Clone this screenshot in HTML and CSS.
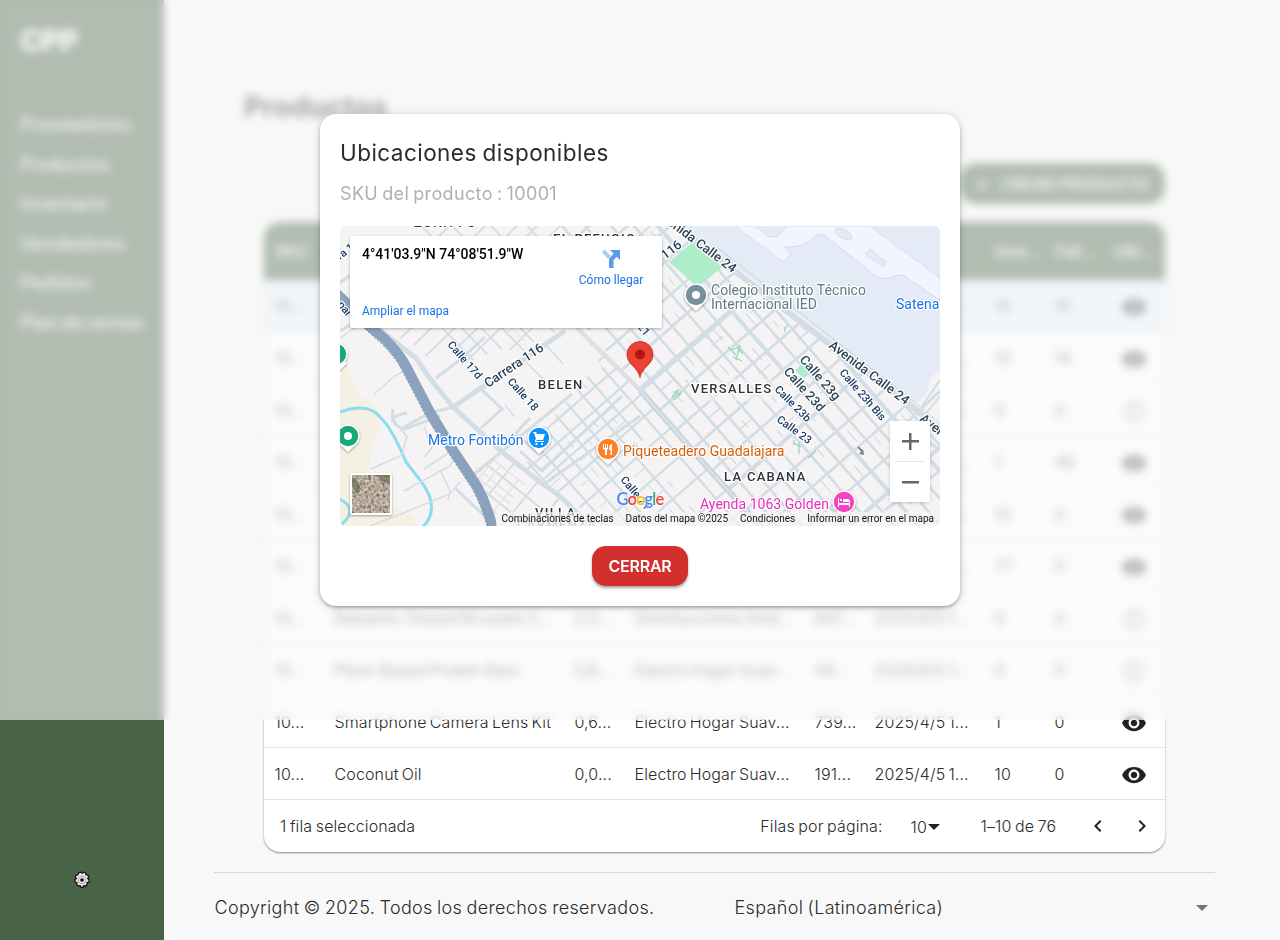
FILE: index.html
```html
<!DOCTYPE html>
<html lang="es">
<head>
<meta charset="utf-8">
<title>CPP - Productos</title>
<link rel="stylesheet" href="styles.css">
</head>
<body>
<svg width="0" height="0" class="defs">
  <symbol id="eye" viewBox="0 0 24 24"><path d="M12 4.5C7 4.5 2.73 7.61 1 12c1.73 4.39 6 7.5 11 7.5s9.27-3.11 11-7.5c-1.73-4.39-6-7.5-11-7.5M12 17c-2.76 0-5-2.24-5-5s2.24-5 5-5 5 2.24 5 5-2.24 5-5 5m0-8c-1.66 0-3 1.34-3 3s1.34 3 3 3 3-1.34 3-3-1.34-3-3-3"/></symbol>
  <symbol id="off" viewBox="0 0 24 24"><path fill-rule="evenodd" d="M12 2a10 10 0 1 0 0 20 10 10 0 0 0 0-20m0 18a8 8 0 1 1 0-16 8 8 0 0 1 0 16M11 7h2v6h-2zM11 15h2v2h-2z"/></symbol>
</svg>
<div class="app">
  <aside class="sidebar">
    <div class="brand">CPP</div>
    <nav class="nav"><a>Proveedores</a><a>Productos</a><a>Inventario</a><a>Vendedores</a><a>Pedidos</a><a>Plan de ventas</a></nav>
    <svg class="gear" viewBox="0 0 18 18"><path d="M7.500 1.200 9 2.200l1.500-1 2 .8.500 1.800 1.800.3.900 2-1 1.400 1.600 1.500-.5 2-1.800.6.300 1.900-1.600 1.500-1.900-.3-.8 1.700H8l-.8-1.700-1.900.3-1.600-1.500.3-1.900-1.800-.6-.5-2 1.600-1.500-1-1.400.9-2 1.800-.3.500-1.800z" fill="#e8e8e8" stroke="#111" stroke-width="1.300" stroke-linejoin="round"/><circle cx="9" cy="9" r="3.700" fill="none" stroke="#aaa" stroke-width="1.200"/><circle cx="9" cy="9" r="1.800" fill="#000"/></svg>
  </aside>
  <main class="main">
    <h1 class="title">Productos</h1>
    <div class="toolbar"><button class="create"><span>+</span>CREAR PRODUCTO</button></div>
    <section class="table">
      <div class="row head"><span>SKU</span><span>Nombre</span><span>Volu...</span><span>Fabricante</span><span>Pre...</span><span>Fecha</span><span>Inve...</span><span>Fall...</span><span class="icon">Ubi...</span></div>
      <div class="row selected"><span>10...</span><span></span><span></span><span></span><span></span><span>2025/4/5 1...</span><span>10</span><span>10</span><span class="icon"><svg><use href="#eye"/></svg></span></div>
      <div class="row"><span>10...</span><span></span><span></span><span></span><span></span><span>2025/4/5 1...</span><span>10</span><span>14</span><span class="icon"><svg><use href="#eye"/></svg></span></div>
      <div class="row"><span>10...</span><span></span><span></span><span></span><span></span><span>2025/4/5 1...</span><span>0</span><span>0</span><span class="icon muted"><svg><use href="#off"/></svg></span></div>
      <div class="row"><span>10...</span><span></span><span></span><span></span><span></span><span>2025/4/5 1...</span><span>1</span><span>48</span><span class="icon"><svg><use href="#eye"/></svg></span></div>
      <div class="row"><span>10...</span><span></span><span></span><span></span><span></span><span>2025/4/5 1...</span><span>10</span><span>0</span><span class="icon"><svg><use href="#eye"/></svg></span></div>
      <div class="row"><span>10...</span><span></span><span></span><span></span><span></span><span>2025/4/5 1...</span><span>77</span><span>0</span><span class="icon"><svg><use href="#eye"/></svg></span></div>
      <div class="row"><span>10...</span><span>Balsamic Glazed Brussels S...</span><span>0,3...</span><span>Distribuciones Andi...</span><span>847...</span><span>2025/4/5 1...</span><span>0</span><span>0</span><span class="icon muted"><svg><use href="#off"/></svg></span></div>
      <div class="row"><span>10...</span><span>Plant-Based Protein Bars</span><span>0,6...</span><span>Electro Hogar Suav...</span><span>44...</span><span>2025/4/5 1...</span><span>0</span><span>0</span><span class="icon muted"><svg><use href="#off"/></svg></span></div>
      <div class="row"><span>10...</span><span>Smartphone Camera Lens Kit</span><span>0,6...</span><span>Electro Hogar Suav...</span><span>739...</span><span>2025/4/5 1...</span><span>1</span><span>0</span><span class="icon"><svg><use href="#eye"/></svg></span></div>
      <div class="row"><span>10...</span><span>Coconut Oil</span><span>0,0...</span><span>Electro Hogar Suav...</span><span>191...</span><span>2025/4/5 1...</span><span>10</span><span>0</span><span class="icon"><svg><use href="#eye"/></svg></span></div>
      <div class="pager">
        <span class="picked">1 fila seleccionada</span>
        <span class="perpage">Filas por página:</span>
        <span class="size">10<i class="caret"></i></span>
        <span class="range">1–10 de 76</span>
        <svg class="chev" viewBox="0 0 24 24"><path d="M15.410 7.410 14 6l-6 6 6 6 1.410-1.410L10.830 12z"/></svg>
        <svg class="chev" viewBox="0 0 24 24"><path d="M10 6 8.590 7.410 13.170 12l-4.580 4.590L10 18l6-6z"/></svg>
      </div>
    </section>
    <footer class="footer"><span class="copy">Copyright © 2025. Todos los derechos reservados.</span><span class="lang">Español (Latinoamérica)</span><i class="caret grey"></i></footer>
  </main>
</div>

<div class="overlay">
  <div class="modal">
    <h2>Ubicaciones disponibles</h2>
    <p class="sku">SKU del producto : 10001</p>
    <div class="map">
      <svg class="tiles" viewBox="0 0 600 300">
        <defs>
          <clipPath id="east"><path d="M237 102 190 60 215 0H343L400 46 487 113 567 173 600 200V300H423L367 241 300 164Z"/></clipPath>
          <clipPath id="west"><path d="M247 112 300 164 367 241 423 300H262L222 268 180 238 200 205 224 180 236 158 262 142Z"/></clipPath>
          <clipPath id="north"><path d="M40 92 75 0H240V90L222 104 196 112 186 130 165 122 130 135 100 150 76 128Z"/></clipPath>
          <clipPath id="south"><path d="M132 244 165 226 222 270 250 300H154Z"/></clipPath>
          <filter id="ground" x="0" y="0" width="1" height="1"><feTurbulence type="fractalNoise" baseFrequency=".35" numOctaves="3" seed="4"/><feColorMatrix values=".9 .3 0 0 -.15  .8 .3 0 0 -.16  .7 .3 0 0 -.18  0 0 0 0 1"/></filter>
        </defs>
        <rect width="600" height="300" fill="#f5f3f4"/>
        <path fill="#f4f0e4" d="M0 134 7 140 20 170 34 178 41 196 31 224 30 246 52 280 73 290 77 300H0Z"/>
        <path fill="#e4eaf6" d="M341 0 400 44 487 111 567 171 578 177 587 167 590 153 600 143V0Z"/>
        <path fill="#f2f5ff" stroke="#d5dcef" d="M395 0 443 36 451 28 445 21Q463 21 470 15 478 4 487 11L537 51Q545 54 555 50 562 47 567 52L600 74V52L530 0H447L440 8Q434 13 428 10L415 0Z"/>
        <ellipse cx="503.500" cy="8" rx="9" ry="4" transform="rotate(28 503.500 8)" fill="#e4eaf6" stroke="#d5dcef"/>
        <path fill="#e4eaf6" stroke="#d5dcef" d="m530 23 16 13-3 5-18-13z"/>
        <path fill="none" stroke="#8bdcec" stroke-width="3" d="M0 186Q28 176 40 191 52 202 66 236L80 254Q102 282 82 302M0 273Q16 282 6 294L0 300"/>

        <g clip-path="url(#east)"><g transform="translate(300 164) rotate(49)" fill="none" stroke="#d3dde4">
          <path stroke-width="2.700" d="M-260-15H300M-260-33H300M-260-49H300M-260-66H300M-220-86H300M-220-103H300M-220-138H300M-120-155H300M-120-190H300M-120-207H300"/>
          <path stroke-width="4" d="M-220-121H300M-120-173H300"/>
          <path stroke-width="2.700" d="M-186 0V-230M-157 0V-230M-132 0V-230M-104 0V-230M-80 0V-230M-52 0V-230M-27 0V-230M28 0V-230M54 0V-230M79 0V-230M108 0V-230M133 0V-230M160 0V-230M186 0V-230M213 0V-230"/>
          <path stroke-width="1.300" stroke-dasharray="9 58 15 73" d="M-200-24H300M-200-41H300M-220-57H300M-190-77H300M-220-95H300M-180-112H300M-210-130H300M-120-146H300M-100-164H300M-120-181H300M-120-199H300"/>
          <path stroke-width="1.500" stroke-dasharray="17 50 16 36" d="M-172 0V-200M-145-15V-200M-117-33V-220M-40-49V-200M14-15V-200M66-33V-200M95-49V-200M121-15V-200"/>
          <path stroke-width="5" d="M0 0V-230"/>
          <path stroke-width="4" d="M133 0V-210M240 0V-230"/>
        </g></g>
        <path fill="#f5f3f4" d="m350 163 12-10h70l8 10-12 12h-66z" opacity=".5"/>
        <g clip-path="url(#west)"><g transform="translate(300 164) rotate(49)" fill="none" stroke="#d3dde4">
          <path stroke-width="2.300" d="M-90 14H240M-90 31H40M-70 47H240M-70 64H50M-60 80H240M-60 97H240M-20 114H200M-20 132H200M-66 0V60M-49 0V90M-32 0V150M-14 0V150M4 0V150M23 0V150M49 0V150M76 14V150M104 0V150M132 0V150M158 0V150M190 0V150"/>
          <path stroke-width="1.200" stroke-dasharray="14 38 8 25" d="M-50 39H200M-60 56H200M-50 72H200M-60 88H200M-5 31V130M14 31V130M34 47V150M62 47V150M91 47V150"/>
        </g></g>
        <g clip-path="url(#north)"><g transform="translate(120 80) rotate(46)" fill="none" stroke="#d3dde4">
          <path stroke-width="1.800" d="M-100-104H120M-100-78H120M-100-50H120M-100-28H120M-30-15H90M-20 0H90M-20 14H90M-80 28H90M-40-140V80M-18-140V80M-4-140V60M12-140V60M28-100V30M44-140V60M-65-140V80M66-100V20"/>
          <path stroke="#e5e7e8" stroke-width="1.500" d="M-10-40H70M-10-22H70M0-60V-15M20-60V-15M34-60V-15M52-60V-15"/>
        </g></g>
        <g clip-path="url(#south)"><g transform="translate(160 226) rotate(39)" fill="none" stroke="#d3dde4" stroke-width="2">
          <path d="M-20 18H120M-10 40H120M-10 65H120M18 0V90M48 0V90M75 0V90"/><path stroke="#e4e4e4" stroke-width="1.500" d="M-25 10H40M-15 27H40M0 34H40M0 50H40M0 10V60M9 10V60M32 10V60"/>
        </g></g>
        <g fill="none" stroke="#d3dde4">
          <path stroke-width="6" d="M343 5 400 49 487 116 567 176 600 204"/>
          <path stroke="#c6d1d8" stroke-width="1" d="m378 22 110 87 80 62 35 29"/>
          <path stroke-width="6" stroke="#cad5dd" d="M300 164 367 241 423 303"/><path stroke-width="4" d="M237 102 300 164"/>
          <path stroke="#dfe6ea" stroke-width="1.500" d="m237 102 63 62 67 77 56 62"/>
          <path stroke-width="5" d="M37 101 Q62 122 76 132L88 150 113 181 160 224 200 256Q230 275 250 303M113 181 225 105M300 164 380 95"/>
          <path stroke-width="3" d="M141 163 162 183 141 202M96 152 122 132 145 111M53 183Q50 200 65 203L100 190M132 250 232 168M115 262 155 300M204 258 300 190M60 203 90 187 113 181M53 196Q50 190 67 187M180 225l22 20 80-75M190 192l-15 16 26 20"/>
          <path stroke-width="1.500" d="M33 169 55 150 66 144M31 243 62 229 67 210 60 203M64 265 110 240 114 232M84 200 92 222 84 231M100 244l10 20-2 10M30 300 66 286 110 268 120 256M165 179l10 12M182 132l28 28M205 118l18 20M84 243 110 226M0 112 20 98M0 58 18 45"/>
          <path stroke-width="3" d="M0 105 12 98M0 56 11 49M600 165 565 198 600 224M545 284 600 245"/>
          <path stroke-width="2" d="M582 180 600 154M600 170 584 190"/>
        </g>
        <path fill="#afecc9" d="M329 36 348 20l6-4 28 25-19 16-8 2zM456 144l6-7 9 10-7 5-8-6z"/>
        <g fill="none" stroke="#92d9b6" stroke-width="1.200"><path d="m388 121 8 8m4-10-4 15m-7-10 12-3m-8 10 9 4m-5-14 6 7M332 171l7-8m-5 11 8-8m-7-1 5 5M453 217l8 4m-7-7v5m5-3v12M468 232l8-7M444 104l4-5m-3 2v5"/></g>
        <path fill="none" stroke="#8aa2be" stroke-width="10" d="M-3 68 12 82 27 98 45 113Q60 128 67 142L90 186 113 224 137 260Q148 281 153 303"/>
        <path fill="none" stroke="#7690b2" stroke-width="1" stroke-dasharray="3 1" d="M22 100 42 118Q56 132 62 144L85 188 108 226 132 262Q143 283 148 303"/>
        <path d="m518 221 5 5" stroke="#7d8791" stroke-width="2"/><path d="m524 229-5-1 4-5z" fill="#7d8791"/>

        <g class="road small">
          <text transform="translate(107 119) rotate(49)">Calle 17d</text><text transform="translate(167 156) rotate(48)">Calle 18</text>
          <text transform="translate(499 147) rotate(49)">Calle 23h Bis</text><text transform="translate(434 164) rotate(45)">Calle 23b</text><text transform="translate(436 195) rotate(36)">Calle 23</text>
          <text transform="translate(280 254) rotate(50)">Calle 21</text><text transform="translate(297 101) rotate(50)">21</text><text transform="translate(0 34) rotate(-38)">ra 116</text><text transform="translate(-3 79) rotate(50)">par</text>
        </g>
        <g class="road">
          <text transform="translate(148 162) rotate(-34)">Carrera 116</text><text transform="translate(488 121) rotate(37)">Avenida Calle 24</text><text transform="translate(315 -11) rotate(37)">Avenida Calle 24</text>
          <text transform="translate(325 34) rotate(-37)">116</text><text transform="translate(459 134) rotate(49)">Calle 23g</text><text transform="translate(443 146) rotate(48)">Calle 23d</text><text transform="translate(579 194) rotate(38)">Avenida</text>
        </g>
        <g class="hood"><text x="74" y="1">ZONA FO</text><text x="213" y="17">EL REFUGIO</text><text x="198" y="163">BELEN</text><text x="351" y="167">VERSALLES</text><text x="384" y="255">LA CABANA</text><text x="195" y="291">VILLA</text><text x="177" y="303" opacity=".6">CARMENZA</text></g>
        <g class="poi"><text x="371" y="69" fill="#5f7a84">Colegio Instituto Técnico</text><text x="371" y="83" fill="#5f7a84">Internacional IED</text><text x="556" y="83" fill="#1a73e8">Satena</text><text x="88" y="219" fill="#1a73e8">Metro Fontibón</text><text x="283" y="230" fill="#d55f06">Piqueteadero Guadalajara</text><text x="360" y="283" fill="#e52dbb">Ayenda 1063 Golden</text></g>
        <g class="pins" stroke="#fff" stroke-width="1.600">
          <path fill="#fff" d="M350 78h12l-6 6zM-6 137h12l-6 6zM2 219h12l-6 6zM193 221h12l-6 6zM262 232h12l-6 6zM498 285h12l-6 6z"/>
          <circle cx="356" cy="69" r="11" fill="#78909c"/><circle cx="-4" cy="128" r="11" fill="#19a974"/><circle cx="8" cy="210" r="11" fill="#19a974"/><circle cx="199" cy="212" r="11" fill="#0a93ff"/><circle cx="268" cy="223" r="11" fill="#ff8126"/><circle cx="504" cy="276" r="11" fill="#f741c6"/>
        </g>
        <circle cx="356" cy="69" r="4" fill="#fff"/><circle cx="8" cy="210" r="4" fill="#fff"/>
        <path fill="#fff" d="M193 206h3l1 2h8l-2 6h-6l-1 1h8v1h-9v-2l1-1-2-6h-1zM195.500 217h2v2h-2zM201 217h2v2h-2zM263 218h1v4h1v-4h1v4h1v-4h1v5l-1 1v5h-2v-5l-2-1zM271 218h1v11h-1.500v-5H269q0-5 2-6zM498 272h1v5h10v-3h1v7h-1v-2h-10v2h-1zM503 273h6v3h-6zM500 273h2v2h-2z"/>
        <path fill="#ea4335" stroke="#c5221f" stroke-width=".8" d="M300 151.500C298 141 287 138.500 287 128.500a13 13 0 0 1 26 0C313 138.500 302 141 300 151.500Z"/><circle cx="300" cy="128.500" r="5" fill="#b31412"/>
        <g class="thumb"><rect x="10" y="247" width="42" height="42" rx="2" fill="#fff"/><rect x="12" y="249" width="38" height="38" filter="url(#ground)"/></g>
        <path fill="#4b5b38" opacity=".5" d="M37 249h13v9l-9-3zM12 251l6 4 3 9-4 4-5-7z"/>
      </svg>
      <div class="place">
        <div class="coords">4°41'03.9"N 74°08'51.9"W</div>
        <div class="route"><svg viewBox="0 0 22 22"><path fill="#a9caf5" d="M2 4 4.500 1.500 11 8l-3 3z"/><path fill="#5b9be8" d="M20 2v10l-3.300-3.300-3.200 3.200V20H9v-9l4.500-5.500L10 2z"/></svg>Cómo llegar</div>
        <div class="enlarge">Ampliar el mapa</div>
      </div>
      <div class="zoomer"><b class="plus"></b><b></b></div>
      <div class="google"><b>G</b><b class="r">o</b><b class="y">o</b><b>g</b><b class="g">l</b><b class="r">e</b></div>
      <div class="attrib"><span>Combinaciones de teclas</span><span>Datos del mapa ©2025</span><span>Condiciones</span><span>Informar un error en el mapa</span></div>
    </div>
    <button class="close">CERRAR</button>
  </div>
</div>
</body>
</html>
```

FILE: styles.css
```css
* { box-sizing: border-box; }
body { margin: 0; font-family: Inter, Lato, sans-serif; color: #2b2b2b; background: #f8f8f8; overflow: hidden; }
.defs { display: block; height: 0; }
.app { display: flex; height: 940px; }

.sidebar { width: 164px; background: #496347; color: #fff; display: flex; flex-direction: column; padding: 21px 20px 51px; }
.brand { font-size: 29px; font-weight: 800; line-height: 40px; letter-spacing: -.5px; }
.nav { display: flex; flex-direction: column; margin-top: 44px; white-space: nowrap; font-size: 18px; letter-spacing: .35px; word-spacing: -2.500px; }
.nav a { line-height: 39.500px; }
.gear { width: 18px; height: 18px; margin: auto auto 0; position: relative; left: -.5px; }

.main { flex: 1; display: flex; flex-direction: column; padding: 0 65px 0 50px; }
.title { margin: 87px 0 0 30px; font-size: 28px; line-height: 40px; font-weight: 700; letter-spacing: .4px; }
.toolbar { display: flex; justify-content: flex-end; margin: 36px 50px 0 0; }
.create { width: 205px; height: 41px; border: 0; border-radius: 16px; background: #496347; color: #fff; font: 500 16px Inter, sans-serif; letter-spacing: 0; display: flex; align-items: center; justify-content: center; gap: 12px; white-space: nowrap; }
.create span { font-size: 20px; }

.table { margin: 18px 50px 0; height: 630px; background: #fff; border-radius: 16px; overflow: hidden; box-shadow: 0 1px 2px rgba(0,0,0,.45); font-weight: 300; font-size: 16px; }
.row { display: grid; grid-template-columns: 60px 240px 60px 180px 60px 120px 60px 60px 61px; height: 52px; border-bottom: 1px solid #e0e0e0; align-items: center; letter-spacing: .13px; word-spacing: -1.500px; white-space: nowrap; }
.row span { padding-left: 10.500px; }
.row .icon { padding: 0 1px 0 0; display: flex; justify-content: center; }
.row svg { width: 26px; height: 26px; margin-top: 3px; fill: #222; }
.row .muted svg { width: 24px; fill: #888; }
.head { height: 58px; background: #496347; color: #fff; font-weight: 500; border: 0; }
.selected { background: #e9f2fb; }
.pager { height: 52px; display: flex; align-items: center; padding: 0 10px 0 16px; letter-spacing: .1px; word-spacing: -1px; }
.picked { flex: 1; }
.perpage { margin-right: 28px; }
.size { display: flex; align-items: center; gap: 1px; width: 70px; padding-top: 1px; }
.range { width: 77px; margin-right: 28.500px; white-space: nowrap; }
.chev { width: 24px; height: 24px; fill: #222; margin-right: 20px; }
.chev:last-child { margin-right: 1px; }
.caret { border: 6px solid transparent; border-top-color: #222; border-bottom: 0; }
.grey { border-top-color: #757575; margin-left: auto; margin-right: 7px; }
.footer { margin-top: 20px; border-top: 1px solid #d8d8d8; height: 68px; display: flex; align-items: center; font-size: 18px; font-weight: 300; letter-spacing: .33px; word-spacing: -1px; padding: 2px 0 0 .5px; }
.copy { width: 520px; }

.overlay { position: absolute; inset: 0 0 auto; height: 720px; display: flex; align-items: center; justify-content: center; background: rgba(248,248,248,.6); backdrop-filter: blur(4px); }
.modal { width: 640px; height: 492px; padding: 20px; border-radius: 16px; background: #fff; box-shadow: 0 2px 4px -1px rgba(0,0,0,.4), 0 1px 10px rgba(0,0,0,.14); display: flex; flex-direction: column; }
.modal h2 { margin: 4px 0 0; font-size: 22.500px; line-height: 30px; font-weight: 400; letter-spacing: .45px; word-spacing: -1px; }
.sku { margin: 12px 0 18px; font-size: 18px; line-height: 28px; color: #b0b0b0; font-weight: 400; letter-spacing: .35px; word-spacing: -1.300px; }
.close { align-self: center; margin-top: 20px; width: 96px; height: 40px; border: 0; border-radius: 14px; background: #d32f2f; color: #fff; font: 600 16px Inter, sans-serif; letter-spacing: -.25px; box-shadow: 0 2px 3px rgba(0,0,0,.35); }

.map { position: relative; width: 600px; height: 300px; flex: none; border-radius: 6px; overflow: hidden; font-family: Roboto, sans-serif; }
.tiles { display: block; width: 600px; height: 300px; }
.tiles text { paint-order: stroke; stroke: #fff; stroke-width: 2.500px; stroke-linejoin: round; }
.road text { font-size: 13px; font-weight: 500; fill: #2b4459; }
.small text { font-size: 11px; fill: #1d3c63; }
.hood text { font-size: 13px; font-weight: 500; letter-spacing: 1.300px; fill: #303338; }
.poi text { font-size: 14px; letter-spacing: .03px; }
.pins, .thumb { filter: drop-shadow(0 1px 1px rgba(0,0,0,.35)); }
.place { position: absolute; left: 10px; top: 10px; width: 312px; height: 92px; background: #fff; border-radius: 2px; box-shadow: 0 1px 3px rgba(0,0,0,.3); padding: 10px 12px; display: grid; grid-template-columns: 1fr 78px; grid-template-rows: 57px 14px; font-size: 12px; line-height: 16px; color: #1a73e8; }
.coords { color: #000; font-weight: 500; font-size: 14px; }
.route { display: flex; flex-direction: column; align-items: center; gap: 2px; padding-top: 2px; white-space: nowrap; }
.route svg { width: 22px; height: 22px; flex: none; }
.zoomer { position: absolute; left: 550px; top: 195px; width: 40px; height: 81px; background: #fff; box-shadow: 0 1px 4px -1px rgba(0,0,0,.3); display: grid; grid-template-rows: 1fr 1fr; }
.zoomer b { display: block; background: linear-gradient(#666,#666) center/17px 2.500px no-repeat; }
.zoomer .plus { background: linear-gradient(#666,#666) center/17px 2.500px no-repeat, linear-gradient(#666,#666) center/2.500px 17px no-repeat, linear-gradient(#e6e6e6,#e6e6e6) bottom/30px 1px no-repeat; }
.google { position: absolute; left: 276.500px; top: 262px; font: 16.500px/22px Lato, sans-serif; color: #4285f4; text-shadow: 0 0 2px #fff, 0 0 2px #fff; letter-spacing: -.9px; }
.google b { font-weight: 600; }
.google .r { color: #ea4335; }
.google .y { color: #fbbc05; }
.google .g { color: #34a853; }
.attrib { position: absolute; right: 0; bottom: 0; height: 14px; display: flex; font-size: 10px; line-height: 14px; color: #111; background: rgba(245,245,245,.7); padding: 0 6px; gap: 12px; white-space: nowrap; }
```
